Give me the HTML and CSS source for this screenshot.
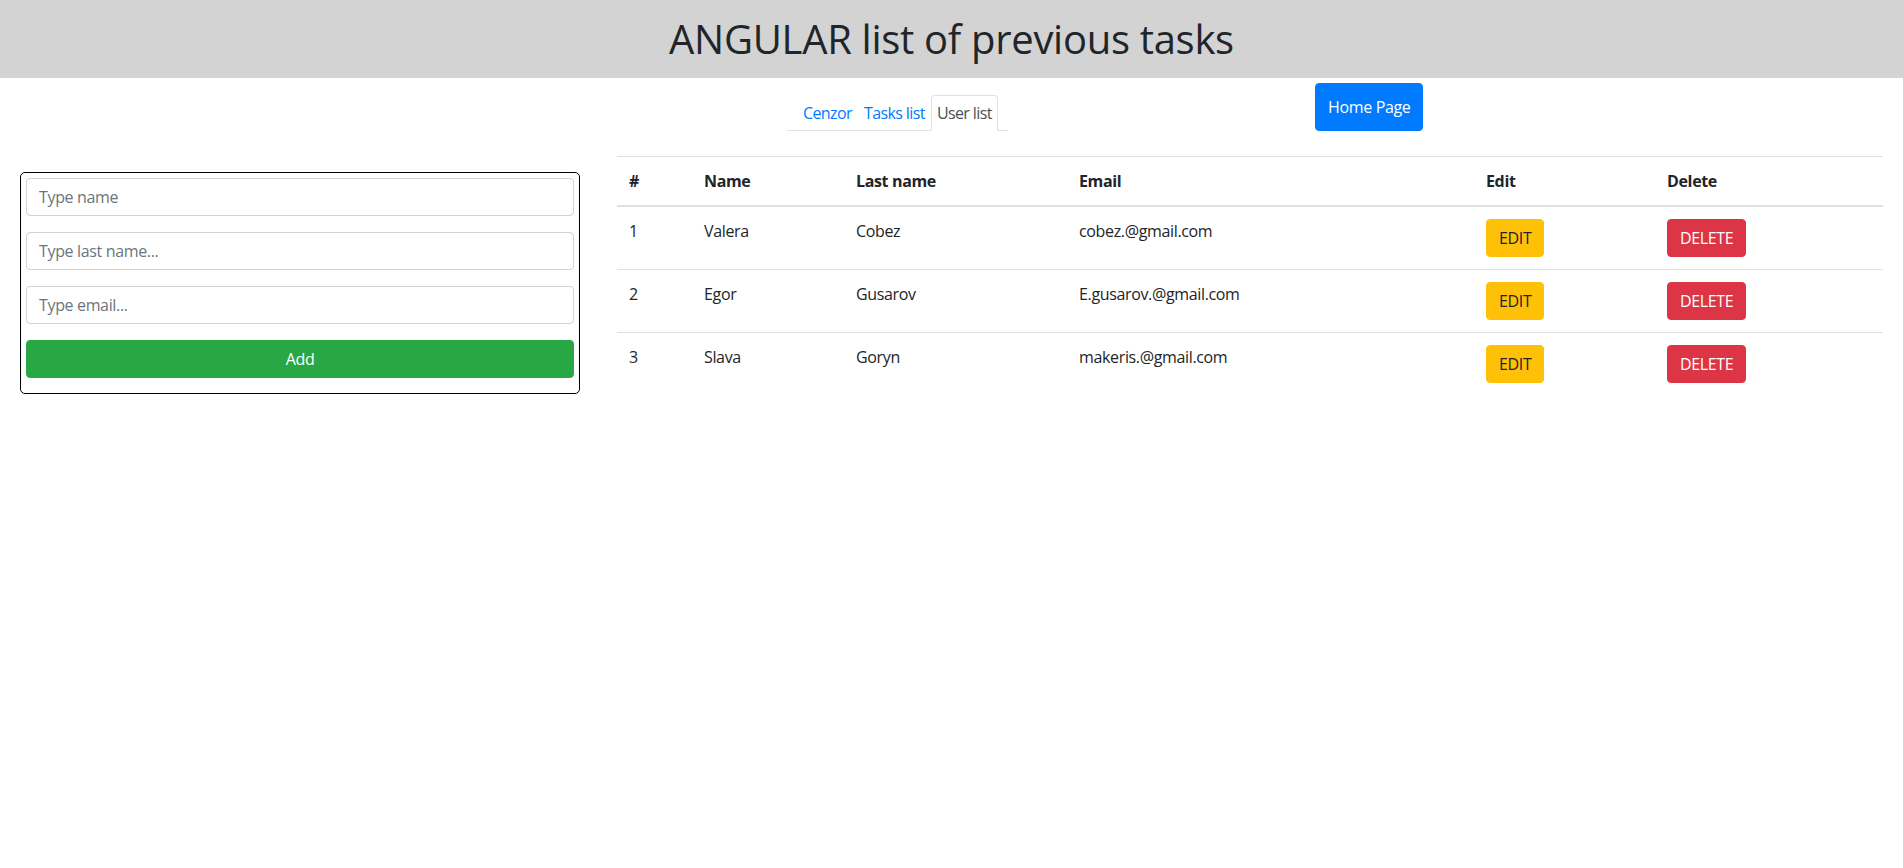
FILE: index.html
```html
<!DOCTYPE html>
<html lang="en">
<head>
<meta charset="utf-8">
<title>Angular tasks</title>
<link rel="stylesheet" href="styles.css">
</head>
<body>
<header class="page-header">
  <h1 class="title">ANGULAR list of previous tasks</h1>
</header>
<div class="topbar">
  <div class="tabs-wrap">
    <ul class="tabs">
      <li><a class="tab-link" href="#">Cenzor</a></li>
      <li><a class="tab-link" href="#">Tasks list</a></li>
      <li><a class="tab-link active" href="#">User list</a></li>
    </ul>
  </div>
  <button class="btn btn-home" type="button">Home Page</button>
</div>
<main class="content">
  <form class="user-form">
    <input class="form-control" type="text" placeholder="Type name">
    <input class="form-control" type="text" placeholder="Type last name...">
    <input class="form-control" type="text" placeholder="Type email...">
    <button class="btn btn-add" type="button">Add</button>
  </form>
  <table class="users">
    <thead>
      <tr>
        <th class="c-num">#</th>
        <th class="c-name">Name</th>
        <th class="c-last">Last name</th>
        <th class="c-email">Email</th>
        <th class="c-edit">Edit</th>
        <th class="c-del">Delete</th>
      </tr>
    </thead>
    <tbody>
      <tr>
        <td>1</td><td>Valera</td><td>Cobez</td><td>cobez.@gmail.com</td>
        <td><button class="btn btn-edit" type="button">EDIT</button></td>
        <td><button class="btn btn-delete" type="button">DELETE</button></td>
      </tr>
      <tr>
        <td>2</td><td>Egor</td><td>Gusarov</td><td>E.gusarov.@gmail.com</td>
        <td><button class="btn btn-edit" type="button">EDIT</button></td>
        <td><button class="btn btn-delete" type="button">DELETE</button></td>
      </tr>
      <tr>
        <td>3</td><td>Slava</td><td>Goryn</td><td>makeris.@gmail.com</td>
        <td><button class="btn btn-edit" type="button">EDIT</button></td>
        <td><button class="btn btn-delete" type="button">DELETE</button></td>
      </tr>
    </tbody>
  </table>
</main>
</body>
</html>
```
FILE: styles.css
```css
* { box-sizing: border-box; }
html, body { margin: 0; padding: 0; }
body {
  font-family: "Open Sans", "Noto Sans", "Liberation Sans", sans-serif;
  font-size: 16px;
  line-height: 24px;
  letter-spacing: -0.35px;
  color: #212529;
  background: #fff;
}
.page-header {
  background: #d3d3d3;
  height: 78px;
  display: flex;
  align-items: center;
  justify-content: center;
}
.title {
  margin: 0;
  font-size: 40px;
  line-height: 48px;
  font-weight: 500;
  letter-spacing: -0.3px;
  color: #212529;
}
.topbar {
  display: flex;
  align-items: flex-start;
  padding-left: 787px;
  height: 78px;
}
.tabs-wrap {
  width: 528px;
  padding-top: 17px;
}
.tabs {
  list-style: none;
  margin: 0;
  padding: 0 10px;
  display: inline-flex;
  border-bottom: 1px solid #dee2e6;
}
.tabs li { margin-bottom: -1px; }
.tab-link {
  display: block;
  padding: 5px 5px;
  border: 1px solid transparent;
  border-radius: 4px 4px 0 0;
  color: #007bff;
  text-decoration: none;
  letter-spacing: -0.6px;
}
.tab-link.active {
  color: #495057;
  border-color: #dee2e6 #dee2e6 #fff;
  background: #fff;
}
.btn {
  font-family: inherit;
  font-size: 16px;
  line-height: 24px;
  letter-spacing: -0.35px;
  border: 1px solid transparent;
  border-radius: 4px;
  padding: 6px 12px;
  white-space: nowrap;
  cursor: pointer;
}
.btn-home {
  margin-top: 5px;
  background: #007bff;
  border-color: #007bff;
  color: #fff;
  padding: 11px 12px;
}
.content {
  display: flex;
  align-items: flex-start;
}
.user-form {
  margin: 16px 0 0 20px;
  width: 560px;
  border: 1px solid #000;
  border-radius: 5px;
  padding: 5px 5px 15px;
  display: flex;
  flex-direction: column;
  gap: 16px;
}
.form-control {
  display: block;
  width: 100%;
  height: 38px;
  padding: 6px 12px;
  font-family: inherit;
  font-size: 16px;
  line-height: 24px;
  letter-spacing: -0.35px;
  color: #495057;
  border: 1px solid #ced4da;
  border-radius: 4px;
  background: #fff;
}
.form-control::placeholder { color: #6c757d; }
.btn-add {
  width: 100%;
  background: #28a745;
  border-color: #28a745;
  color: #fff;
}
.users {
  margin-left: 37px;
  width: 1266px;
  border-collapse: collapse;
}
.users th, .users td {
  padding: 12px;
  text-align: left;
  vertical-align: top;
  border-top: 1px solid #dee2e6;
}
.users th {
  font-weight: 700;
  border-bottom: 2px solid #dee2e6;
}
.c-num { width: 75px; }
.c-name { width: 152px; }
.c-last { width: 223px; }
.c-email { width: 407px; }
.c-edit { width: 181px; }
.c-del { width: 228px; }
.btn-edit {
  background: #ffc107;
  border-color: #ffc107;
  color: #212529;
}
.btn-delete {
  background: #dc3545;
  border-color: #dc3545;
  color: #fff;
}
```
